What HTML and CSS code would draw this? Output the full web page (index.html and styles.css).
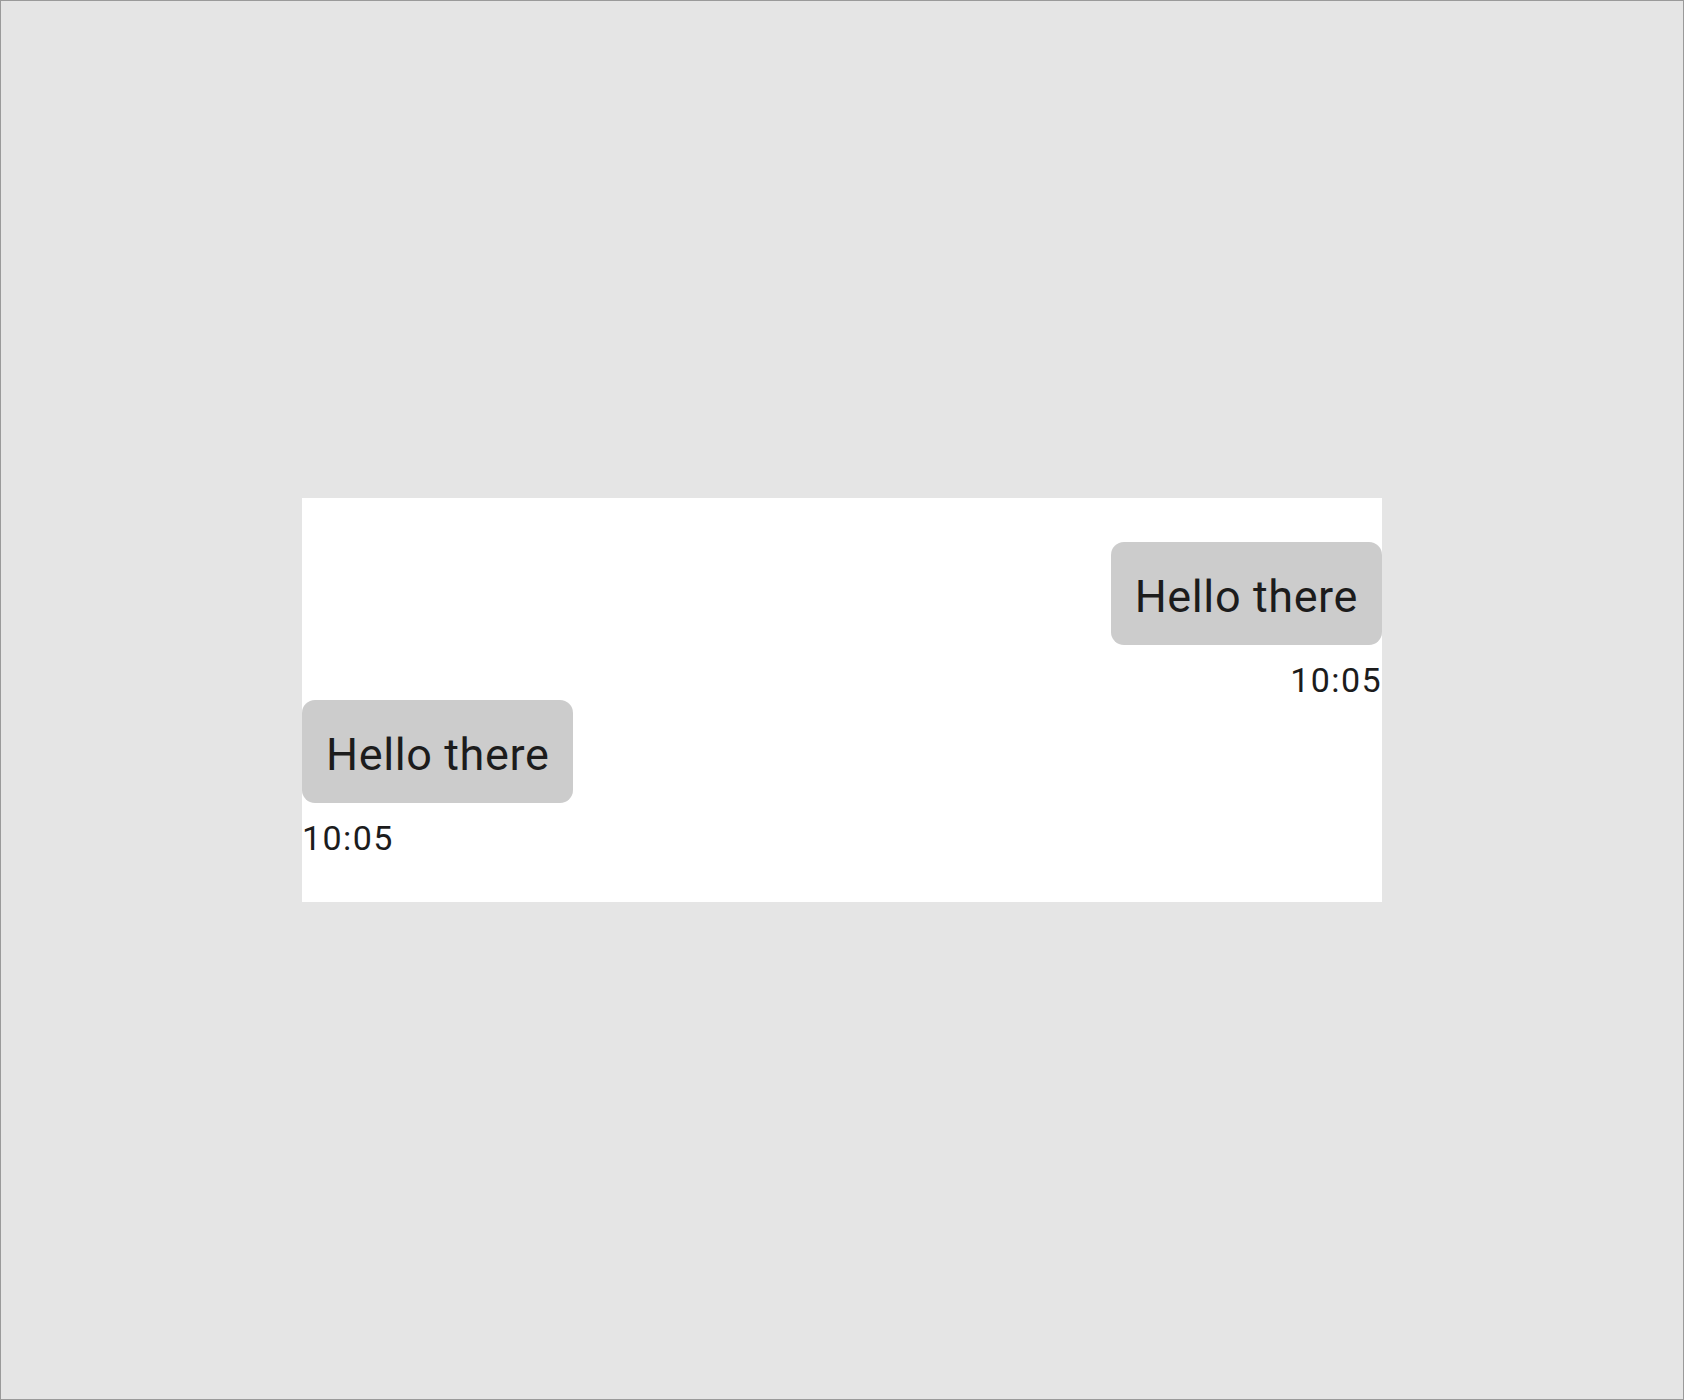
FILE: index.html
```html
<html>
   <head>
      <link rel="stylesheet" href="styles.css">
   </head>
   <body>
      <div class="chat">
         <div class="message outgoing">
            <div class="bubble">Hello there</div>
            <div class="time">10:05</div>
         </div>
         <div class="message incoming">
            <div class="bubble">Hello there</div>
            <div class="time">10:05</div>
         </div>
      </div>
   </body>
</html>
```

FILE: styles.css
```css
html, body {
height: 100%;
}
body {
margin: 0;
box-sizing: border-box;
border: 1px solid #9a9a9a;
background-color: #e5e5e5;
display: flex;
align-items: center;
justify-content: center;
font-family: Roboto, "Liberation Sans", sans-serif;
color: #1c1c1c;
}
.chat {
width: 1080px;
background-color: #ffffff;
padding: 44px 0;
display: flex;
flex-direction: column;
}
.message {
display: flex;
flex-direction: column;
}
.outgoing {
align-items: flex-end;
}
.incoming {
align-items: flex-start;
}
.bubble {
background-color: #cccccc;
border-radius: 13px;
padding: 28px 24px 22px 24px;
font-size: 45px;
letter-spacing: 0.6px;
}
.time {
margin-top: 15px;
font-size: 34px;
letter-spacing: 1.4px;
}
```
